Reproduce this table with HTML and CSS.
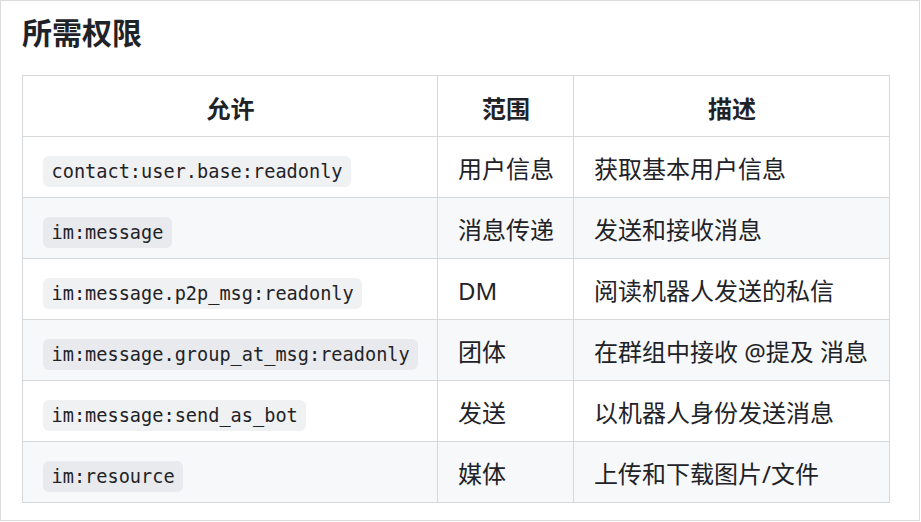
FILE: index.html
```html
<!DOCTYPE html>
<html lang="zh">
<head>
<meta charset="utf-8">
<title>所需权限</title>
<link rel="stylesheet" href="styles.css">
</head>
<body>
<div class="frame">
  <h3 class="title">所需权限</h3>
  <table class="perm">
    <colgroup>
      <col class="c1"><col class="c2"><col class="c3">
    </colgroup>
    <thead>
      <tr><th>允许</th><th>范围</th><th>描述</th></tr>
    </thead>
    <tbody>
      <tr><td><code>contact:user.base:readonly</code></td><td>用户信息</td><td>获取基本用户信息</td></tr>
      <tr><td><code>im:message</code></td><td>消息传递</td><td>发送和接收消息</td></tr>
      <tr><td><code>im:message.p2p_msg:readonly</code></td><td>DM</td><td>阅读机器人发送的私信</td></tr>
      <tr><td><code>im:message.group_at_msg:readonly</code></td><td>团体</td><td>在群组中接收 @提及 消息</td></tr>
      <tr><td><code>im:message:send_as_bot</code></td><td>发送</td><td>以机器人身份发送消息</td></tr>
      <tr><td><code>im:resource</code></td><td>媒体</td><td>上传和下载图片/文件</td></tr>
    </tbody>
  </table>
</div>
</body>
</html>
```

FILE: styles.css
```css
html, body {
  margin: 0;
  padding: 0;
  background: #ffffff;
}

.frame {
  box-sizing: border-box;
  width: 920px;
  height: 521px;
  border: 1px solid #dcdcdc;
  padding: 12px 0 0 21px;
  font-family: "Noto Sans", "Noto Sans CJK SC", sans-serif;
  color: #1f2328;
  font-size: 24px;
}

.title {
  margin: 0 0 25px 0;
  font-size: 30px;
  line-height: 37px;
  font-weight: 700;
  font-family: "Noto Sans CJK SC", sans-serif;
  color: #1f2328;
}

.perm {
  border-collapse: collapse;
  border-spacing: 0;
  table-layout: fixed;
  width: 867px;
}

.c1 { width: 415px; }
.c2 { width: 136px; }
.c3 { width: 316px; }

.perm th,
.perm td {
  border: 1px solid #d5d8db;
  padding: 14px 19px 10px 20px;
  line-height: 36px;
  height: 36px;
  text-align: left;
  vertical-align: middle;
  white-space: nowrap;
}

.perm th {
  text-align: center;
  font-weight: 700;
  font-family: "Noto Sans CJK SC", sans-serif;
}

.perm td {
  font-family: "Noto Sans", "Noto Sans CJK SC", sans-serif;
  font-weight: 400;
}

.perm tbody tr:nth-child(even) {
  background: #f6f8fa;
}

.perm code {
  display: inline-block;
  font-family: "DejaVu Sans Mono", monospace;
  font-size: 18.6px;
  line-height: 23px;
  padding: 4px 8.5px;
  border-radius: 6px;
  background: rgba(129, 139, 152, 0.12);
  color: #1f2328;
  vertical-align: middle;
}
```
